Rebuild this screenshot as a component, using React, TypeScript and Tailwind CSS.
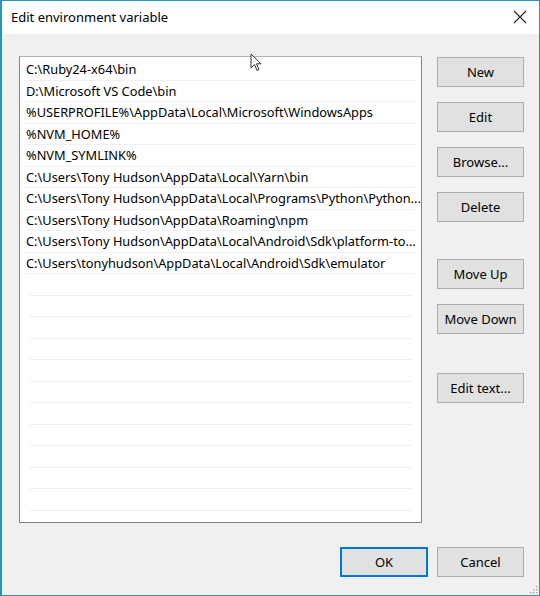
const paths = [
  'C:\\Ruby24-x64\\bin',
  'D:\\Microsoft VS Code\\bin',
  '%USERPROFILE%\\AppData\\Local\\Microsoft\\WindowsApps',
  '%NVM_HOME%',
  '%NVM_SYMLINK%',
  'C:\\Users\\Tony Hudson\\AppData\\Local\\Yarn\\bin',
  'C:\\Users\\Tony Hudson\\AppData\\Local\\Programs\\Python\\Python...',
  'C:\\Users\\Tony Hudson\\AppData\\Roaming\\npm',
  'C:\\Users\\Tony Hudson\\AppData\\Local\\Android\\Sdk\\platform-to...',
  'C:\\Users\\tonyhudson\\AppData\\Local\\Android\\Sdk\\emulator',
];

const emptyRows = Array.from({ length: 11 });

function Btn({ label, primary = false }: { label: string; primary?: boolean }) {
  return (
    <button
      className={
        primary
          ? 'w-[88px] h-[30px] bg-[#e1e1e1] border-2 border-[#0078d7] text-[13px] text-black pt-[1px]'
          : 'w-[87px] h-[30px] bg-[#e1e1e1] border border-[#adadad] text-[13px] text-black pt-[1px]'
      }
    >
      {label}
    </button>
  );
}

export default function App() {
  return (
    <div
      className="relative w-[540px] h-[596px] bg-[#f0f0f0] border border-[#2f93b4] border-l-2 flex flex-col overflow-hidden"
      style={{ fontFamily: '"Noto Sans", "Open Sans", sans-serif' }}
    >
      {/* Title bar */}
      <div className="h-[33px] bg-white flex items-center justify-between pl-[9px] pr-[12px] shrink-0">
        <span className="text-[13px] text-black">Edit environment variable</span>
        <svg width="14" height="14" viewBox="0 0 14 14" className="mt-[-2px]">
          <path d="M1 1 L13 13 M13 1 L1 13" stroke="#222" strokeWidth="1.1" />
        </svg>
      </div>

      {/* Body */}
      <div className="flex pl-[17px] pt-[22px]">
        {/* List */}
        <div className="w-[403px] h-[467px] bg-white border border-[#828282] border-t-[#b4b4b4] pt-[2px] overflow-hidden">
          {paths.map((p) => (
            <div key={p} className="h-[21.5px] mx-[6px] border-b border-[#f0f0f0] flex items-center whitespace-nowrap">
              <span className="text-[12.8px] text-black leading-none pt-[1px]">{p}</span>
            </div>
          ))}
          {emptyRows.map((_, i) => (
            <div key={i} className="h-[21.5px] mx-[10px] border-b border-[#eeeeee]" />
          ))}
        </div>

        {/* Side buttons */}
        <div className="flex flex-col ml-[15px] pt-[1px]">
          <div className="flex flex-col gap-[15px]">
            <Btn label="New" />
            <Btn label="Edit" />
            <Btn label="Browse..." />
            <Btn label="Delete" />
          </div>
          <div className="flex flex-col gap-[15px] mt-[37px]">
            <Btn label="Move Up" />
            <Btn label="Move Down" />
          </div>
          <div className="mt-[39px]">
            <Btn label="Edit text..." />
          </div>
        </div>
      </div>

      {/* Footer */}
      <div className="flex justify-end gap-[9px] pr-[15px] mt-[24px]">
        <Btn label="OK" primary />
        <Btn label="Cancel" />
      </div>

      {/* Resize grip */}
      <svg width="10" height="10" viewBox="0 0 10 10" className="absolute right-[1px] bottom-[1px]">
        {[
          [8, 2], [8, 5], [5, 5], [8, 8], [5, 8], [2, 8],
        ].map(([x, y]) => (
          <rect key={`${x}-${y}`} x={x} y={y} width="1.5" height="1.5" fill="#b0b0b0" />
        ))}
      </svg>

      {/* Mouse cursor */}
      <svg width="14" height="20" viewBox="0 0 14 20" className="absolute left-[248px] top-[52px]">
        <path d="M1 1 L1 15 L4.5 11.5 L7 17.5 L9 16.5 L6.5 10.8 L11 10.8 Z" fill="white" stroke="#333" strokeWidth="1" strokeLinejoin="round" />
      </svg>
    </div>
  );
}
